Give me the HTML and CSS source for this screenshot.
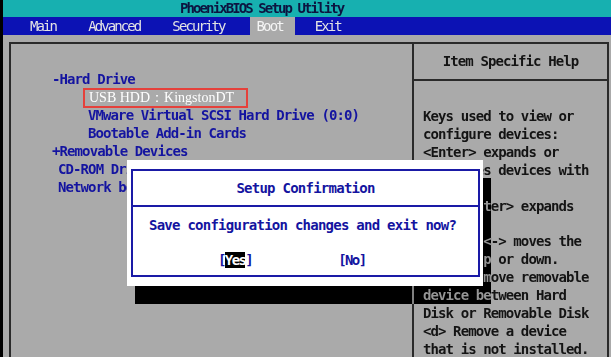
FILE: index.html
```html
<!DOCTYPE html>
<html lang="en">
<head>
  <meta charset="UTF-8">
  <title>PhoenixBIOS Setup Utility</title>
  <link rel="stylesheet" href="styles.css">
</head>
<body>

<div class="screen">
  <div class="title-bar">PhoenixBIOS Setup Utility</div>
  <nav class="menu">
    <span class="menu-item">Main</span>
    <span class="menu-item">Advanced</span>
    <span class="menu-item">Security</span>
    <span class="menu-item active">Boot</span>
    <span class="menu-item">Exit</span>
  </nav>

  <div class="main">
    <div class="frame">
      <div class="boot-list">
        <div class="line">-Hard Drive</div>
        <div class="line sub"><span class="picked">USB HDD：KingstonDT</span></div>
        <div class="line sub">VMware Virtual SCSI Hard Drive (0:0)</div>
        <div class="line sub">Bootable Add-in Cards</div>
        <div class="line">+Removable Devices</div>
        <div class="line plain">CD-ROM Drive</div>
        <div class="line plain">Network boot from AMD Am79C970A</div>
      </div>
      <div class="help">
        <div class="help-head">Item Specific Help</div>
        <div class="help-text">
          <div>Keys used to view or</div>
          <div>configure devices:</div>
          <div>&lt;Enter&gt; expands or</div>
          <div>collapses devices with</div>
          <div>a + or -</div>
          <div>&lt;Ctrl+Enter&gt; expands</div>
          <div>all</div>
          <div>&lt;+&gt; and &lt;-&gt; moves the</div>
          <div>device up or down.</div>
          <div>&lt;n&gt; May move removable</div>
          <div>device between Hard</div>
          <div>Disk or Removable Disk</div>
          <div>&lt;d&gt; Remove a device</div>
          <div>that is not installed.</div>
        </div>
      </div>
    </div>
  </div>

  <div class="dialog-shadow"></div>
  <div class="dialog">
    <div class="dialog-box">
      <div class="dialog-title">Setup Confirmation</div>
      <div class="dialog-msg">Save configuration changes and exit now?</div>
      <div class="dialog-buttons">
        <span class="btn">[<span class="sel">Yes</span>]</span>
        <span class="btn">[No]</span>
      </div>
    </div>
  </div>
</div>

</body>
</html>
```

FILE: styles.css
```css
body {
  margin: 0;
  background-color: #aaaaaa;
  overflow: hidden;
  font-family: "DejaVu Sans Mono", "Liberation Mono", monospace;
  font-size: 14px;
  font-weight: bold;
  letter-spacing: -0.9px;
}
.screen {
  position: relative;
  height: 357px;
  border-left: 3px solid #000;
  overflow: hidden;
}
.title-bar {
  height: 17px;
  line-height: 17px;
  background-color: #17b0b0;
  color: #0c1440;
  padding-left: 177px;
  letter-spacing: -1.9px;
}
.menu {
  display: flex;
  gap: 13px;
  height: 18px;
  padding-left: 20px;
  background-color: #0c12b4;
  letter-spacing: -1.9px;
  font-weight: normal;
}
.menu-item {
  padding: 0 12px 0 7px;
  line-height: 18px;
  color: #e4e4e4;
}
.menu-item.active {
  background-color: #aaaaaa;
  color: #f4f4f4;
}
.main {
  padding: 7px 2px 0 6px;
}
.frame {
  display: grid;
  grid-template-columns: 401px 1fr;
  height: 330px;
  border: 2px solid #2a2a2a;
}
.boot-list {
  padding: 26px 0 0 41px;
  color: #1414a0;
}
.line {
  height: 18px;
  line-height: 18px;
  white-space: nowrap;
}
.line.sub {
  padding-left: 36px;
}
.line.plain {
  padding-left: 6px;
}
.picked {
  display: inline-block;
  margin-left: -5px;
  padding: 0 12px 0 4px;
  height: 16px;
  line-height: 16px;
  border: 2px solid #e5413b;
  color: #fff;
  font-family: "Liberation Serif", serif;
  font-size: 14px;
  font-weight: normal;
  letter-spacing: 0;
}
.help {
  border-left: 2px solid #2a2a2a;
  color: #141414;
}
.help-head {
  height: 35px;
  line-height: 35px;
  text-align: center;
  border-bottom: 2px solid #2a2a2a;
}
.help-text {
  padding: 27px 0 0 9px;
  line-height: 17.9px;
  white-space: nowrap;
}
.dialog-shadow {
  position: absolute;
  left: 132px;
  top: 178px;
  width: 356px;
  height: 126px;
  background-color: #aaaaaa;
  mix-blend-mode: difference;
}
.dialog {
  position: absolute;
  left: 124px;
  top: 160px;
  width: 349px;
  height: 108px;
  padding: 9px 3px 9px 4px;
  background-color: #fff;
}
.dialog-box {
  height: 104px;
  border: 2px solid #1a1aa6;
  color: #1414a0;
  letter-spacing: -0.75px;
}
.dialog-title {
  height: 34px;
  line-height: 34px;
  text-align: center;
  border-bottom: 2px solid #1a1aa6;
}
.dialog-msg {
  height: 36px;
  line-height: 36px;
  padding-left: 16px;
}
.dialog-buttons {
  display: flex;
  gap: 86px;
  padding-left: 85px;
  line-height: 34px;
  letter-spacing: -1.6px;
}
.sel {
  background-color: #000;
  color: #fff;
}
```
